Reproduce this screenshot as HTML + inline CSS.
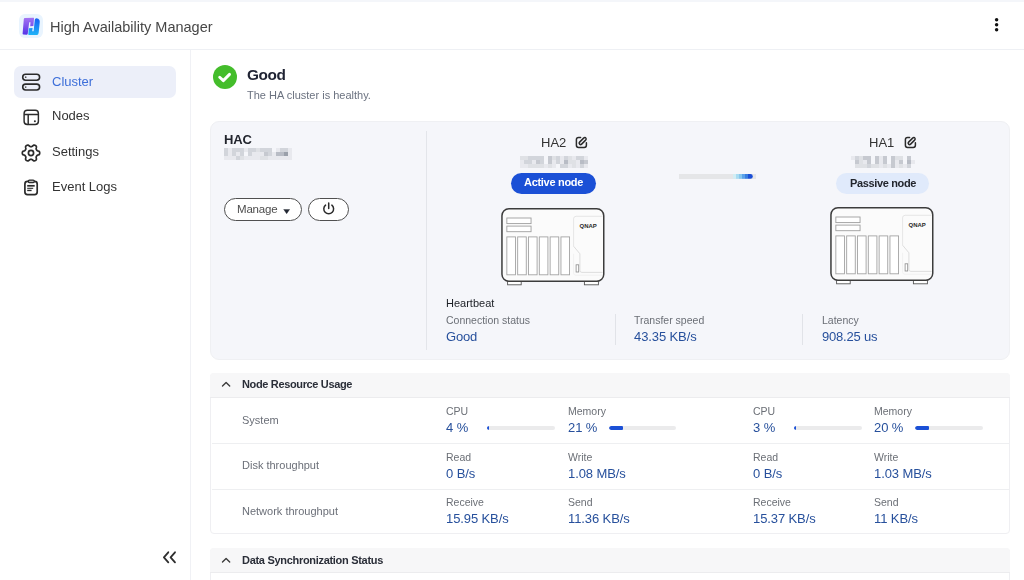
<!DOCTYPE html>
<html><head><meta charset="utf-8"><title>High Availability Manager</title>
<style>
html,body{margin:0;padding:0;}
body{width:1024px;height:580px;overflow:hidden;position:relative;background:#fff;font-family:"Liberation Sans",sans-serif;}
.t{position:absolute;line-height:1;white-space:nowrap;will-change:transform;}
svg{display:block;}
</style></head><body>
<div style="position:absolute;left:0;top:0;width:1024px;height:49px;background:#fff"></div>
<div style="position:absolute;left:0;top:0;width:1024px;height:1.5px;background:#f4f6fa"></div>
<div style="position:absolute;left:0;top:49px;width:1024px;height:1px;background:#eef0f4"></div>
<svg style="position:absolute;left:19px;top:14px" width="24" height="24" viewBox="0 0 24 24">
<defs>
<linearGradient id="lgp" x1="0" y1="0" x2="0" y2="1"><stop offset="0" stop-color="#a474f2"/><stop offset="1" stop-color="#5533e6"/></linearGradient>
<linearGradient id="lgb" x1="0" y1="0" x2="0" y2="1"><stop offset="0" stop-color="#1660f4"/><stop offset="1" stop-color="#1fb4f7"/></linearGradient>
</defs>
<rect x="0" y="0" width="24" height="24" rx="6" fill="#e9f4fe"/>
<path d="M5.8 4.0 L14.6 3.7 Q15.2 3.8 15.0 5.0 L14.4 12.0 L11.2 12.2 L11.5 8.2 L10.2 8.2 L8.7 20.0 Q8.5 20.6 7.6 20.7 L4.4 20.5 Q3.5 20.3 3.6 19.4 L4.8 5.2 Q5.0 4.1 5.8 4.0 Z" fill="url(#lgp)"/>
<path d="M17.4 4.2 Q19.6 4.2 20.4 6.0 Q20.9 7.2 20.7 8.6 L19.7 18.6 Q19.5 20.8 18.2 20.9 L10.3 21.1 Q9.3 21.1 9.3 20.2 L9.8 14.2 L13.6 13.9 L13.2 17.2 L14.6 17.2 L15.8 5.8 Q16.0 4.3 17.4 4.2 Z" fill="url(#lgb)"/>
</svg>
<div class="t" style="left:50.3px;top:19.83px;font-size:14.5px;color:#474747;">High Availability Manager</div>

<svg style="position:absolute;left:990px;top:14px" width="14" height="22" viewBox="0 0 14 22"><circle cx="6.6" cy="5.7" r="1.75" fill="#111"/><circle cx="6.6" cy="10.8" r="1.75" fill="#111"/><circle cx="6.6" cy="15.8" r="1.75" fill="#111"/></svg>
<div style="position:absolute;left:190px;top:50px;width:1px;height:530px;background:#f0f1f5"></div>
<div style="position:absolute;left:14px;top:65.5px;width:162px;height:32px;border-radius:7px;background:#eceff9"></div>
<svg style="position:absolute;left:21px;top:72px" width="21" height="20" viewBox="0 0 21 20" fill="none" stroke="#2b2b2b" stroke-width="1.6">
<rect x="1.7" y="2.3" width="16.9" height="5.9" rx="2.9"/><rect x="1.7" y="12.1" width="16.9" height="5.9" rx="2.9"/>
<circle cx="4.7" cy="5.2" r="0.85" fill="#555" stroke="none"/><circle cx="4.7" cy="15.05" r="0.85" fill="#555" stroke="none"/>
</svg>
<div class="t" style="left:52.2px;top:74.60px;font-size:13px;color:#3d6fd9;">Cluster</div>

<svg style="position:absolute;left:22px;top:108px" width="19" height="19" viewBox="0 0 19 19" fill="none" stroke="#2b2b2b" stroke-width="1.45">
<rect x="2.1" y="2.3" width="14.3" height="14.1" rx="3.2"/><path d="M2.1 6.4 H16.4 M6.2 6.4 V16.4"/>
<circle cx="12.9" cy="13.2" r="1" fill="#2b2b2b" stroke="none"/>
</svg>
<div class="t" style="left:52.2px;top:109.30px;font-size:13px;color:#333;">Nodes</div>

<svg style="position:absolute;left:19px;top:140.6px" width="24" height="24" viewBox="0 0 24 24" fill="none" stroke="#2b2b2b" stroke-width="1.7" stroke-linejoin="round">
<path d="M20.70 12.00 L20.66 12.57 L20.51 13.12 L20.12 13.61 L19.29 13.95 L18.46 14.19 L18.02 14.49 L17.76 14.84 L17.54 15.20 L17.34 15.57 L17.17 15.96 L17.13 16.50 L17.34 17.34 L17.46 18.22 L17.23 18.81 L16.82 19.22 L16.35 19.53 L15.84 19.79 L15.29 19.93 L14.66 19.84 L13.95 19.29 L13.33 18.69 L12.85 18.46 L12.42 18.41 L12.00 18.40 L11.58 18.41 L11.15 18.46 L10.67 18.69 L10.05 19.29 L9.34 19.84 L8.71 19.93 L8.16 19.79 L7.65 19.53 L7.18 19.22 L6.77 18.81 L6.54 18.22 L6.66 17.34 L6.87 16.50 L6.83 15.96 L6.66 15.57 L6.46 15.20 L6.24 14.84 L5.98 14.49 L5.54 14.19 L4.71 13.95 L3.88 13.61 L3.49 13.12 L3.34 12.57 L3.30 12.00 L3.34 11.43 L3.49 10.88 L3.88 10.39 L4.71 10.05 L5.54 9.81 L5.98 9.51 L6.24 9.16 L6.46 8.80 L6.66 8.43 L6.83 8.04 L6.87 7.50 L6.66 6.66 L6.54 5.78 L6.77 5.19 L7.18 4.78 L7.65 4.47 L8.16 4.21 L8.71 4.07 L9.34 4.16 L10.05 4.71 L10.67 5.31 L11.15 5.54 L11.58 5.59 L12.00 5.60 L12.42 5.59 L12.85 5.54 L13.33 5.31 L13.95 4.71 L14.66 4.16 L15.29 4.07 L15.84 4.21 L16.35 4.47 L16.82 4.78 L17.23 5.19 L17.46 5.78 L17.34 6.66 L17.13 7.50 L17.17 8.04 L17.34 8.43 L17.54 8.80 L17.76 9.16 L18.02 9.51 L18.46 9.81 L19.29 10.05 L20.12 10.39 L20.51 10.88 L20.66 11.43 Z"/>
<circle cx="12" cy="12" r="2.6"/>
</svg>
<div class="t" style="left:52.3px;top:145.00px;font-size:13px;color:#333;">Settings</div>

<svg style="position:absolute;left:22px;top:178px" width="18" height="20" viewBox="0 0 18 20" fill="none" stroke="#2b2b2b" stroke-width="1.7">
<rect x="2.9" y="3.3" width="12.3" height="13.3" rx="2.6"/>
<rect x="6.3" y="2.2" width="6" height="2.4" rx="1.1" fill="#bbb" stroke-width="1.3"/>
<path d="M5.2 7.8 h7.5" stroke-width="1.7"/><path d="M5.2 10.3 h6" stroke-width="1.1"/><path d="M5.2 12.45 h4.4" stroke-width="1.4"/>
</svg>
<div class="t" style="left:52.3px;top:180.10px;font-size:13px;color:#333;">Event Logs</div>

<svg style="position:absolute;left:160px;top:549px" width="20" height="17" viewBox="0 0 20 17" fill="none" stroke="#2e2e2e" stroke-width="1.8" stroke-linecap="round" stroke-linejoin="round">
<path d="M8.3 3.3 L3.9 8.4 L8.3 13.4 M15 3.3 L10.6 8.4 L15 13.4"/>
</svg>
<svg style="position:absolute;left:213px;top:65px" width="24" height="24" viewBox="0 0 24 24">
<circle cx="12" cy="12" r="12" fill="#44bd2b"/>
<path d="M6.7 12.3 L10.3 15.6 L16.5 9.4" fill="none" stroke="#fff" stroke-width="2.9" stroke-linecap="round" stroke-linejoin="round"/>
</svg>
<div class="t" style="left:246.6px;top:67.46px;font-size:15.4px;color:#1f2333;font-weight:700;letter-spacing:-0.45px;">Good</div>

<div class="t" style="left:246.7px;top:90.19px;font-size:11px;color:#6b7280;">The HA cluster is healthy.</div>

<div style="position:absolute;left:210px;top:121px;width:799.7px;height:238.7px;box-sizing:border-box;border:1px solid #eff0f3;border-radius:9px;background:#f5f6fa"></div>
<div class="t" style="left:224.3px;top:132.90px;font-size:13px;color:#22252d;font-weight:700;letter-spacing:-0.1px;">HAC</div>

<div style="position:absolute;left:224px;top:148px;filter:blur(0.65px)"><div style="position:absolute;left:0px;top:0px;width:4px;height:4px;background:#d2d5db"></div><div style="position:absolute;left:4px;top:0px;width:4px;height:4px;background:#e8e9ee"></div><div style="position:absolute;left:8px;top:0px;width:4px;height:4px;background:#d2d5db"></div><div style="position:absolute;left:12px;top:0px;width:4px;height:4px;background:#d2d5db"></div><div style="position:absolute;left:16px;top:0px;width:4px;height:4px;background:#d2d5db"></div><div style="position:absolute;left:20px;top:0px;width:4px;height:4px;background:#e8e9ee"></div><div style="position:absolute;left:24px;top:0px;width:4px;height:4px;background:#d2d5db"></div><div style="position:absolute;left:28px;top:0px;width:4px;height:4px;background:#d2d5db"></div><div style="position:absolute;left:32px;top:0px;width:4px;height:4px;background:#dfe1e5"></div><div style="position:absolute;left:36px;top:0px;width:4px;height:4px;background:#d2d5db"></div><div style="position:absolute;left:40px;top:0px;width:4px;height:4px;background:#d2d5db"></div><div style="position:absolute;left:44px;top:0px;width:4px;height:4px;background:#d2d5db"></div><div style="position:absolute;left:52px;top:0px;width:4px;height:4px;background:#e8e9ee"></div><div style="position:absolute;left:56px;top:0px;width:4px;height:4px;background:#d2d5db"></div><div style="position:absolute;left:60px;top:0px;width:4px;height:4px;background:#d2d5db"></div><div style="position:absolute;left:64px;top:0px;width:4px;height:4px;background:#e8e9ee"></div><div style="position:absolute;left:0px;top:4px;width:4px;height:4px;background:#d2d5db"></div><div style="position:absolute;left:4px;top:4px;width:4px;height:4px;background:#e8e9ee"></div><div style="position:absolute;left:8px;top:4px;width:4px;height:4px;background:#d2d5db"></div><div style="position:absolute;left:12px;top:4px;width:4px;height:4px;background:#e8e9ee"></div><div style="position:absolute;left:16px;top:4px;width:4px;height:4px;background:#d2d5db"></div><div style="position:absolute;left:24px;top:4px;width:4px;height:4px;background:#d2d5db"></div><div style="position:absolute;left:28px;top:4px;width:4px;height:4px;background:#e8e9ee"></div><div style="position:absolute;left:32px;top:4px;width:4px;height:4px;background:#e8e9ee"></div><div style="position:absolute;left:36px;top:4px;width:4px;height:4px;background:#e8e9ee"></div><div style="position:absolute;left:40px;top:4px;width:4px;height:4px;background:#c6c9d0"></div><div style="position:absolute;left:44px;top:4px;width:4px;height:4px;background:#d2d5db"></div><div style="position:absolute;left:48px;top:4px;width:4px;height:4px;background:#e8e9ee"></div><div style="position:absolute;left:52px;top:4px;width:4px;height:4px;background:#b8bcc5"></div><div style="position:absolute;left:56px;top:4px;width:4px;height:4px;background:#b8bcc5"></div><div style="position:absolute;left:60px;top:4px;width:4px;height:4px;background:#9aa0aa"></div><div style="position:absolute;left:64px;top:4px;width:4px;height:4px;background:#e8e9ee"></div><div style="position:absolute;left:0px;top:8px;width:4px;height:4px;background:#e8e9ee"></div><div style="position:absolute;left:4px;top:8px;width:4px;height:4px;background:#e8e9ee"></div><div style="position:absolute;left:8px;top:8px;width:4px;height:4px;background:#e8e9ee"></div><div style="position:absolute;left:12px;top:8px;width:4px;height:4px;background:#d2d5db"></div><div style="position:absolute;left:16px;top:8px;width:4px;height:4px;background:#dfe1e5"></div><div style="position:absolute;left:20px;top:8px;width:4px;height:4px;background:#e8e9ee"></div><div style="position:absolute;left:24px;top:8px;width:4px;height:4px;background:#e8e9ee"></div><div style="position:absolute;left:28px;top:8px;width:4px;height:4px;background:#e8e9ee"></div><div style="position:absolute;left:32px;top:8px;width:4px;height:4px;background:#e8e9ee"></div><div style="position:absolute;left:36px;top:8px;width:4px;height:4px;background:#dfe1e5"></div><div style="position:absolute;left:40px;top:8px;width:4px;height:4px;background:#dfe1e5"></div><div style="position:absolute;left:44px;top:8px;width:4px;height:4px;background:#e8e9ee"></div><div style="position:absolute;left:48px;top:8px;width:4px;height:4px;background:#e8e9ee"></div><div style="position:absolute;left:52px;top:8px;width:4px;height:4px;background:#e8e9ee"></div><div style="position:absolute;left:56px;top:8px;width:4px;height:4px;background:#e8e9ee"></div><div style="position:absolute;left:60px;top:8px;width:4px;height:4px;background:#e8e9ee"></div><div style="position:absolute;left:64px;top:8px;width:4px;height:4px;background:#e8e9ee"></div></div>
<div style="position:absolute;left:520px;top:156px;filter:blur(0.65px)"><div style="position:absolute;left:0px;top:0px;width:4px;height:4px;background:#dfe1e5"></div><div style="position:absolute;left:4px;top:0px;width:4px;height:4px;background:#dfe1e5"></div><div style="position:absolute;left:8px;top:0px;width:4px;height:4px;background:#d2d5db"></div><div style="position:absolute;left:12px;top:0px;width:4px;height:4px;background:#d2d5db"></div><div style="position:absolute;left:16px;top:0px;width:4px;height:4px;background:#d2d5db"></div><div style="position:absolute;left:20px;top:0px;width:4px;height:4px;background:#d2d5db"></div><div style="position:absolute;left:28px;top:0px;width:4px;height:4px;background:#c6c9d0"></div><div style="position:absolute;left:32px;top:0px;width:4px;height:4px;background:#dfe1e5"></div><div style="position:absolute;left:36px;top:0px;width:4px;height:4px;background:#d2d5db"></div><div style="position:absolute;left:40px;top:0px;width:4px;height:4px;background:#e8e9ee"></div><div style="position:absolute;left:44px;top:0px;width:4px;height:4px;background:#d2d5db"></div><div style="position:absolute;left:48px;top:0px;width:4px;height:4px;background:#dfe1e5"></div><div style="position:absolute;left:52px;top:0px;width:4px;height:4px;background:#e8e9ee"></div><div style="position:absolute;left:56px;top:0px;width:4px;height:4px;background:#d2d5db"></div><div style="position:absolute;left:60px;top:0px;width:4px;height:4px;background:#d2d5db"></div><div style="position:absolute;left:64px;top:0px;width:4px;height:4px;background:#e8e9ee"></div><div style="position:absolute;left:0px;top:4px;width:4px;height:4px;background:#e8e9ee"></div><div style="position:absolute;left:4px;top:4px;width:4px;height:4px;background:#d2d5db"></div><div style="position:absolute;left:8px;top:4px;width:4px;height:4px;background:#d2d5db"></div><div style="position:absolute;left:12px;top:4px;width:4px;height:4px;background:#e8e9ee"></div><div style="position:absolute;left:16px;top:4px;width:4px;height:4px;background:#c6c9d0"></div><div style="position:absolute;left:20px;top:4px;width:4px;height:4px;background:#d2d5db"></div><div style="position:absolute;left:28px;top:4px;width:4px;height:4px;background:#c6c9d0"></div><div style="position:absolute;left:32px;top:4px;width:4px;height:4px;background:#e8e9ee"></div><div style="position:absolute;left:36px;top:4px;width:4px;height:4px;background:#d2d5db"></div><div style="position:absolute;left:40px;top:4px;width:4px;height:4px;background:#e8e9ee"></div><div style="position:absolute;left:44px;top:4px;width:4px;height:4px;background:#b8bcc5"></div><div style="position:absolute;left:48px;top:4px;width:4px;height:4px;background:#dfe1e5"></div><div style="position:absolute;left:52px;top:4px;width:4px;height:4px;background:#dfe1e5"></div><div style="position:absolute;left:56px;top:4px;width:4px;height:4px;background:#e8e9ee"></div><div style="position:absolute;left:60px;top:4px;width:4px;height:4px;background:#b8bcc5"></div><div style="position:absolute;left:64px;top:4px;width:4px;height:4px;background:#c6c9d0"></div><div style="position:absolute;left:0px;top:8px;width:4px;height:4px;background:#e8e9ee"></div><div style="position:absolute;left:4px;top:8px;width:4px;height:4px;background:#e8e9ee"></div><div style="position:absolute;left:8px;top:8px;width:4px;height:4px;background:#dfe1e5"></div><div style="position:absolute;left:12px;top:8px;width:4px;height:4px;background:#dfe1e5"></div><div style="position:absolute;left:16px;top:8px;width:4px;height:4px;background:#dfe1e5"></div><div style="position:absolute;left:20px;top:8px;width:4px;height:4px;background:#dfe1e5"></div><div style="position:absolute;left:24px;top:8px;width:4px;height:4px;background:#e8e9ee"></div><div style="position:absolute;left:28px;top:8px;width:4px;height:4px;background:#dfe1e5"></div><div style="position:absolute;left:32px;top:8px;width:4px;height:4px;background:#e8e9ee"></div><div style="position:absolute;left:40px;top:8px;width:4px;height:4px;background:#d2d5db"></div><div style="position:absolute;left:44px;top:8px;width:4px;height:4px;background:#d2d5db"></div><div style="position:absolute;left:48px;top:8px;width:4px;height:4px;background:#e8e9ee"></div><div style="position:absolute;left:52px;top:8px;width:4px;height:4px;background:#dfe1e5"></div><div style="position:absolute;left:56px;top:8px;width:4px;height:4px;background:#e8e9ee"></div><div style="position:absolute;left:60px;top:8px;width:4px;height:4px;background:#d2d5db"></div><div style="position:absolute;left:64px;top:8px;width:4px;height:4px;background:#e8e9ee"></div></div>
<div style="position:absolute;left:851px;top:156px;filter:blur(0.65px)"><div style="position:absolute;left:0px;top:0px;width:4px;height:4px;background:#e8e9ee"></div><div style="position:absolute;left:4px;top:0px;width:4px;height:4px;background:#d2d5db"></div><div style="position:absolute;left:8px;top:0px;width:4px;height:4px;background:#dfe1e5"></div><div style="position:absolute;left:12px;top:0px;width:4px;height:4px;background:#c6c9d0"></div><div style="position:absolute;left:16px;top:0px;width:4px;height:4px;background:#c6c9d0"></div><div style="position:absolute;left:24px;top:0px;width:4px;height:4px;background:#c6c9d0"></div><div style="position:absolute;left:28px;top:0px;width:4px;height:4px;background:#e8e9ee"></div><div style="position:absolute;left:32px;top:0px;width:4px;height:4px;background:#c6c9d0"></div><div style="position:absolute;left:40px;top:0px;width:4px;height:4px;background:#c6c9d0"></div><div style="position:absolute;left:44px;top:0px;width:4px;height:4px;background:#dfe1e5"></div><div style="position:absolute;left:48px;top:0px;width:4px;height:4px;background:#dfe1e5"></div><div style="position:absolute;left:56px;top:0px;width:4px;height:4px;background:#c6c9d0"></div><div style="position:absolute;left:4px;top:4px;width:4px;height:4px;background:#c6c9d0"></div><div style="position:absolute;left:8px;top:4px;width:4px;height:4px;background:#dfe1e5"></div><div style="position:absolute;left:12px;top:4px;width:4px;height:4px;background:#e8e9ee"></div><div style="position:absolute;left:16px;top:4px;width:4px;height:4px;background:#c6c9d0"></div><div style="position:absolute;left:24px;top:4px;width:4px;height:4px;background:#c6c9d0"></div><div style="position:absolute;left:28px;top:4px;width:4px;height:4px;background:#e8e9ee"></div><div style="position:absolute;left:32px;top:4px;width:4px;height:4px;background:#c6c9d0"></div><div style="position:absolute;left:40px;top:4px;width:4px;height:4px;background:#c6c9d0"></div><div style="position:absolute;left:44px;top:4px;width:4px;height:4px;background:#e8e9ee"></div><div style="position:absolute;left:48px;top:4px;width:4px;height:4px;background:#c6c9d0"></div><div style="position:absolute;left:56px;top:4px;width:4px;height:4px;background:#b8bcc5"></div><div style="position:absolute;left:60px;top:4px;width:4px;height:4px;background:#e8e9ee"></div><div style="position:absolute;left:4px;top:8px;width:4px;height:4px;background:#dfe1e5"></div><div style="position:absolute;left:8px;top:8px;width:4px;height:4px;background:#dfe1e5"></div><div style="position:absolute;left:12px;top:8px;width:4px;height:4px;background:#dfe1e5"></div><div style="position:absolute;left:16px;top:8px;width:4px;height:4px;background:#d2d5db"></div><div style="position:absolute;left:20px;top:8px;width:4px;height:4px;background:#dfe1e5"></div><div style="position:absolute;left:24px;top:8px;width:4px;height:4px;background:#dfe1e5"></div><div style="position:absolute;left:28px;top:8px;width:4px;height:4px;background:#e8e9ee"></div><div style="position:absolute;left:32px;top:8px;width:4px;height:4px;background:#dfe1e5"></div><div style="position:absolute;left:36px;top:8px;width:4px;height:4px;background:#e8e9ee"></div><div style="position:absolute;left:40px;top:8px;width:4px;height:4px;background:#c6c9d0"></div><div style="position:absolute;left:44px;top:8px;width:4px;height:4px;background:#e8e9ee"></div><div style="position:absolute;left:48px;top:8px;width:4px;height:4px;background:#dfe1e5"></div><div style="position:absolute;left:52px;top:8px;width:4px;height:4px;background:#e8e9ee"></div><div style="position:absolute;left:56px;top:8px;width:4px;height:4px;background:#d2d5db"></div></div>
<div style="position:absolute;left:223.8px;top:198.2px;width:78.4px;height:22.6px;box-sizing:border-box;border:1.1px solid #505050;border-radius:12px;background:#fff"></div>
<div class="t" style="left:236.9px;top:204.17px;font-size:11.5px;color:#4d4d4d;letter-spacing:-0.2px;">Manage</div>

<svg style="position:absolute;left:282.5px;top:208.5px" width="8" height="6" viewBox="0 0 8 6"><path d="M0.7 0.4 H6.6 L3.65 4.7 Z" fill="#232833" stroke="#232833" stroke-width="0.4" stroke-linejoin="round"/></svg>
<div style="position:absolute;left:308.4px;top:198.2px;width:40.2px;height:22.6px;box-sizing:border-box;border:1.1px solid #505050;border-radius:12px;background:#fff"></div>
<svg style="position:absolute;left:321px;top:201px" width="16" height="16" viewBox="0 0 16 16" fill="none" stroke="#2b2b2b" stroke-width="1.5" stroke-linecap="round">
<path d="M4.55 4.15 A4.9 4.9 0 1 0 10.85 4.15"/><path d="M7.7 2.1 V7.6"/></svg>
<div style="position:absolute;left:426px;top:131px;width:1px;height:218.5px;background:#e3e5ea"></div>
<div class="t" style="left:541.3px;top:136.30px;font-size:13px;color:#333;">HA2</div>

<svg style="position:absolute;left:574.8px;top:135.8px" width="13" height="13" viewBox="0 0 13 13" fill="none" stroke="#2b2b2b" stroke-width="1.5" stroke-linecap="round" stroke-linejoin="round">
<path d="M5.6 1.4 H3.6 Q1.4 1.4 1.4 3.6 V9.2 Q1.4 11.4 3.6 11.4 H9.2 Q11.4 11.4 11.4 9.2 V6.8"/>
<path d="M10.6 1.7 Q11.8 2.9 10.6 4.1 L6.6 8.1 Q5.6 9.1 4.6 8.1 Q3.6 7.1 4.6 6.1 L8.6 2.1 Q9.6 1.1 10.6 1.7 Z"/></svg>
<div class="t" style="left:869.2px;top:136.30px;font-size:13px;color:#333;">HA1</div>

<svg style="position:absolute;left:904.3px;top:135.8px" width="13" height="13" viewBox="0 0 13 13" fill="none" stroke="#2b2b2b" stroke-width="1.5" stroke-linecap="round" stroke-linejoin="round">
<path d="M5.6 1.4 H3.6 Q1.4 1.4 1.4 3.6 V9.2 Q1.4 11.4 3.6 11.4 H9.2 Q11.4 11.4 11.4 9.2 V6.8"/>
<path d="M10.6 1.7 Q11.8 2.9 10.6 4.1 L6.6 8.1 Q5.6 9.1 4.6 8.1 Q3.6 7.1 4.6 6.1 L8.6 2.1 Q9.6 1.1 10.6 1.7 Z"/></svg>
<div style="position:absolute;left:510.9px;top:172.7px;width:84.8px;height:21.1px;border-radius:11px;background:#1b50d6"></div>
<div class="t" style="left:523.9px;top:176.89px;font-size:11px;color:#fff;font-weight:700;letter-spacing:-0.3px;">Active node</div>

<div style="position:absolute;left:835.9px;top:172.9px;width:93.2px;height:21.3px;border-radius:11px;background:#e0eafb"></div>
<div class="t" style="left:849.8px;top:177.69px;font-size:11px;color:#23262d;font-weight:700;letter-spacing:-0.35px;">Passive node</div>

<div style="position:absolute;left:679.3px;top:174.1px;width:76.7px;height:4.8px;background:#e5e6e8"></div>
<svg style="position:absolute;left:732.6px;top:174.1px" width="20" height="5" viewBox="0 0 20 5">
<rect x="0" y="0" width="3" height="4.8" fill="#d3eef4"/>
<rect x="3" y="0" width="3" height="4.8" fill="#a9dcf2"/>
<rect x="6" y="0" width="3" height="4.8" fill="#86c6ee"/>
<rect x="9" y="0" width="3" height="4.8" fill="#5aa2ea"/>
<rect x="12" y="0" width="3" height="4.8" fill="#3a7fe0"/>
<path d="M15 0 H17.4 A2.4 2.4 0 0 1 17.4 4.8 H15 Z" fill="#1b4fd6"/>
</svg>
<svg style="position:absolute;left:500px;top:206.5px" width="108" height="80" viewBox="0 0 108 80">
<rect x="7.6" y="74.2" width="13.6" height="3.6" fill="#fff" stroke="#555" stroke-width="0.9"/>
<rect x="84.4" y="74.2" width="14" height="3.6" fill="#fff" stroke="#555" stroke-width="0.9"/>
<rect x="1.95" y="1.65" width="101.8" height="72.6" rx="7" fill="#fbfbfb" stroke="#3c3c3c" stroke-width="1.5"/>
<rect x="6.85" y="11.0" width="24.2" height="5.6" fill="#fff" stroke="#9e9e9e" stroke-width="0.9"/>
<rect x="6.85" y="19.1" width="24.2" height="5.6" fill="#fff" stroke="#9e9e9e" stroke-width="0.9"/>
<rect x="6.85" y="29.9" width="8.6" height="37.9" fill="#fff" stroke="#a3a3a3" stroke-width="0.9"/><rect x="17.67" y="29.9" width="8.6" height="37.9" fill="#fff" stroke="#a3a3a3" stroke-width="0.9"/><rect x="28.49" y="29.9" width="8.6" height="37.9" fill="#fff" stroke="#a3a3a3" stroke-width="0.9"/><rect x="39.31" y="29.9" width="8.6" height="37.9" fill="#fff" stroke="#a3a3a3" stroke-width="0.9"/><rect x="50.13" y="29.9" width="8.6" height="37.9" fill="#fff" stroke="#a3a3a3" stroke-width="0.9"/><rect x="60.95" y="29.9" width="8.6" height="37.9" fill="#fff" stroke="#a3a3a3" stroke-width="0.9"/>
<path d="M73.6 39.2 V11.8 Q73.6 9.3 76.1 9.3 H102.6" fill="none" stroke="#e0e0e0" stroke-width="0.8"/>
<path d="M73.6 39.2 L79.9 46.8 V63.4 Q79.9 65.4 81.9 65.4 H102.6" fill="none" stroke="#d6d6d6" stroke-width="0.8"/>
<path d="M73.6 46.8 V66 Q73.6 68.2 75.8 68.2 H102.6" fill="none" stroke="#ececec" stroke-width="0.7"/>
<rect x="76.1" y="57.8" width="2.6" height="7.2" fill="#fff" stroke="#8a8a8a" stroke-width="0.8"/>
<text x="79.5" y="20.5" font-family="Liberation Sans" font-weight="700" font-size="5.2" fill="#2a2a2a" textLength="17.2" lengthAdjust="spacingAndGlyphs">QNAP</text>
</svg>
<svg style="position:absolute;left:828.7px;top:206.3px" width="108" height="80" viewBox="0 0 108 80">
<rect x="7.6" y="74.2" width="13.6" height="3.6" fill="#fff" stroke="#555" stroke-width="0.9"/>
<rect x="84.4" y="74.2" width="14" height="3.6" fill="#fff" stroke="#555" stroke-width="0.9"/>
<rect x="1.95" y="1.65" width="101.8" height="72.6" rx="7" fill="#fbfbfb" stroke="#3c3c3c" stroke-width="1.5"/>
<rect x="6.85" y="11.0" width="24.2" height="5.6" fill="#fff" stroke="#9e9e9e" stroke-width="0.9"/>
<rect x="6.85" y="19.1" width="24.2" height="5.6" fill="#fff" stroke="#9e9e9e" stroke-width="0.9"/>
<rect x="6.85" y="29.9" width="8.6" height="37.9" fill="#fff" stroke="#a3a3a3" stroke-width="0.9"/><rect x="17.67" y="29.9" width="8.6" height="37.9" fill="#fff" stroke="#a3a3a3" stroke-width="0.9"/><rect x="28.49" y="29.9" width="8.6" height="37.9" fill="#fff" stroke="#a3a3a3" stroke-width="0.9"/><rect x="39.31" y="29.9" width="8.6" height="37.9" fill="#fff" stroke="#a3a3a3" stroke-width="0.9"/><rect x="50.13" y="29.9" width="8.6" height="37.9" fill="#fff" stroke="#a3a3a3" stroke-width="0.9"/><rect x="60.95" y="29.9" width="8.6" height="37.9" fill="#fff" stroke="#a3a3a3" stroke-width="0.9"/>
<path d="M73.6 39.2 V11.8 Q73.6 9.3 76.1 9.3 H102.6" fill="none" stroke="#e0e0e0" stroke-width="0.8"/>
<path d="M73.6 39.2 L79.9 46.8 V63.4 Q79.9 65.4 81.9 65.4 H102.6" fill="none" stroke="#d6d6d6" stroke-width="0.8"/>
<path d="M73.6 46.8 V66 Q73.6 68.2 75.8 68.2 H102.6" fill="none" stroke="#ececec" stroke-width="0.7"/>
<rect x="76.1" y="57.8" width="2.6" height="7.2" fill="#fff" stroke="#8a8a8a" stroke-width="0.8"/>
<text x="79.5" y="20.5" font-family="Liberation Sans" font-weight="700" font-size="5.2" fill="#2a2a2a" textLength="17.2" lengthAdjust="spacingAndGlyphs">QNAP</text>
</svg>
<div class="t" style="left:446.0px;top:297.59px;font-size:11px;color:#1c1f25;">Heartbeat</div>

<div class="t" style="left:446.0px;top:315.11px;font-size:10.5px;color:#6b6f76;">Connection status</div>

<div class="t" style="left:446.0px;top:329.90px;font-size:13px;color:#27509c;letter-spacing:-0.2px;">Good</div>

<div style="position:absolute;left:614.5px;top:314px;width:1px;height:31px;background:#e1e3e8"></div>
<div class="t" style="left:634.1px;top:315.11px;font-size:10.5px;color:#6b6f76;">Transfer speed</div>

<div class="t" style="left:634.1px;top:329.90px;font-size:13px;color:#27509c;letter-spacing:-0.1px;">43.35 KB/s</div>

<div style="position:absolute;left:801.5px;top:314px;width:1px;height:31px;background:#e1e3e8"></div>
<div class="t" style="left:821.6px;top:315.11px;font-size:10.5px;color:#6b6f76;">Latency</div>

<div class="t" style="left:821.6px;top:329.90px;font-size:13px;color:#27509c;letter-spacing:-0.2px;">908.25 us</div>

<div style="position:absolute;left:210.2px;top:372.8px;width:799.8px;height:161.6px;box-sizing:border-box;border:1px solid #efeff2;border-radius:4px;background:#fff"></div>
<div style="position:absolute;left:210.2px;top:372.8px;width:799.8px;height:25.2px;border-radius:4px 4px 0 0;background:#f7f7f8;border-bottom:1px solid #ececee;box-sizing:border-box"></div>
<svg style="position:absolute;left:219.5px;top:379.5px" width="12" height="9" viewBox="0 0 12 9" fill="none" stroke="#3a3a3a" stroke-width="1.35" stroke-linecap="round" stroke-linejoin="round"><path d="M2.5 6.0 L6.1 2.4 L9.7 6.0"/></svg>
<div class="t" style="left:241.7px;top:378.69px;font-size:11px;color:#2a2e38;font-weight:700;letter-spacing:-0.35px;">Node Resource Usage</div>

<div style="position:absolute;left:211.5px;top:443px;width:797px;height:1px;background:#eeeff1"></div>
<div style="position:absolute;left:211.5px;top:489px;width:797px;height:1px;background:#eeeff1"></div>
<div class="t" style="left:241.7px;top:414.69px;font-size:11px;color:#6b6f78;">System</div>

<div class="t" style="left:241.7px;top:460.29px;font-size:11px;color:#6b6f78;">Disk throughput</div>

<div class="t" style="left:241.7px;top:506.19px;font-size:11px;color:#6b6f78;">Network throughput</div>

<div class="t" style="left:446.0px;top:406.21px;font-size:10.5px;color:#6b6f76;">CPU</div>

<div class="t" style="left:446.0px;top:420.70px;font-size:13px;color:#27509c;letter-spacing:-0.1px;">4 %</div>

<div class="t" style="left:567.7px;top:406.21px;font-size:10.5px;color:#6b6f76;">Memory</div>

<div class="t" style="left:567.7px;top:420.70px;font-size:13px;color:#27509c;letter-spacing:-0.1px;">21 %</div>

<div class="t" style="left:753.0px;top:406.21px;font-size:10.5px;color:#6b6f76;">CPU</div>

<div class="t" style="left:753.0px;top:420.70px;font-size:13px;color:#27509c;letter-spacing:-0.1px;">3 %</div>

<div class="t" style="left:874.4px;top:406.21px;font-size:10.5px;color:#6b6f76;">Memory</div>

<div class="t" style="left:874.4px;top:420.70px;font-size:13px;color:#27509c;letter-spacing:-0.1px;">20 %</div>

<div class="t" style="left:446.0px;top:451.61px;font-size:10.5px;color:#6b6f76;">Read</div>

<div class="t" style="left:446.0px;top:466.60px;font-size:13px;color:#27509c;letter-spacing:-0.1px;">0 B/s</div>

<div class="t" style="left:567.7px;top:451.61px;font-size:10.5px;color:#6b6f76;">Write</div>

<div class="t" style="left:567.7px;top:466.60px;font-size:13px;color:#27509c;letter-spacing:-0.1px;">1.08 MB/s</div>

<div class="t" style="left:753.0px;top:451.61px;font-size:10.5px;color:#6b6f76;">Read</div>

<div class="t" style="left:753.0px;top:466.60px;font-size:13px;color:#27509c;letter-spacing:-0.1px;">0 B/s</div>

<div class="t" style="left:874.4px;top:451.61px;font-size:10.5px;color:#6b6f76;">Write</div>

<div class="t" style="left:874.4px;top:466.60px;font-size:13px;color:#27509c;letter-spacing:-0.1px;">1.03 MB/s</div>

<div class="t" style="left:446.0px;top:497.31px;font-size:10.5px;color:#6b6f76;">Receive</div>

<div class="t" style="left:446.0px;top:512.20px;font-size:13px;color:#27509c;letter-spacing:-0.1px;">15.95 KB/s</div>

<div class="t" style="left:567.7px;top:497.31px;font-size:10.5px;color:#6b6f76;">Send</div>

<div class="t" style="left:567.7px;top:512.20px;font-size:13px;color:#27509c;letter-spacing:-0.1px;">11.36 KB/s</div>

<div class="t" style="left:753.0px;top:497.31px;font-size:10.5px;color:#6b6f76;">Receive</div>

<div class="t" style="left:753.0px;top:512.20px;font-size:13px;color:#27509c;letter-spacing:-0.1px;">15.37 KB/s</div>

<div class="t" style="left:874.4px;top:497.31px;font-size:10.5px;color:#6b6f76;">Send</div>

<div class="t" style="left:874.4px;top:512.20px;font-size:13px;color:#27509c;letter-spacing:-0.1px;">11 KB/s</div>

<div style="position:absolute;left:487.0px;top:425.7px;width:67.5px;height:4.4px;border-radius:2.2px;background:#ebebec;overflow:hidden"><div style="width:2.2px;height:100%;border-radius:2.2px 1.2px 1.2px 2.2px;background:#1b50d6"></div></div>
<div style="position:absolute;left:608.7px;top:425.7px;width:67.5px;height:4.4px;border-radius:2.2px;background:#ebebec;overflow:hidden"><div style="width:14.1px;height:100%;border-radius:2.2px 1.2px 1.2px 2.2px;background:#1b50d6"></div></div>
<div style="position:absolute;left:794.0px;top:425.7px;width:67.5px;height:4.4px;border-radius:2.2px;background:#ebebec;overflow:hidden"><div style="width:2.2px;height:100%;border-radius:2.2px 1.2px 1.2px 2.2px;background:#1b50d6"></div></div>
<div style="position:absolute;left:915.4px;top:425.7px;width:67.5px;height:4.4px;border-radius:2.2px;background:#ebebec;overflow:hidden"><div style="width:13.4px;height:100%;border-radius:2.2px 1.2px 1.2px 2.2px;background:#1b50d6"></div></div>
<div style="position:absolute;left:210.2px;top:548px;width:799.8px;height:40px;box-sizing:border-box;border:1px solid #efeff2;border-radius:4px;background:#fff"></div>
<div style="position:absolute;left:210.2px;top:548px;width:799.8px;height:25.4px;border-radius:4px 4px 0 0;background:#f7f7f8;border-bottom:1px solid #ececee;box-sizing:border-box"></div>
<svg style="position:absolute;left:219.5px;top:555.5px" width="12" height="9" viewBox="0 0 12 9" fill="none" stroke="#3a3a3a" stroke-width="1.35" stroke-linecap="round" stroke-linejoin="round"><path d="M2.5 6.0 L6.1 2.4 L9.7 6.0"/></svg>
<div class="t" style="left:241.7px;top:554.89px;font-size:11px;color:#2a2e38;font-weight:700;letter-spacing:-0.3px;">Data Synchronization Status</div>

</body></html>
